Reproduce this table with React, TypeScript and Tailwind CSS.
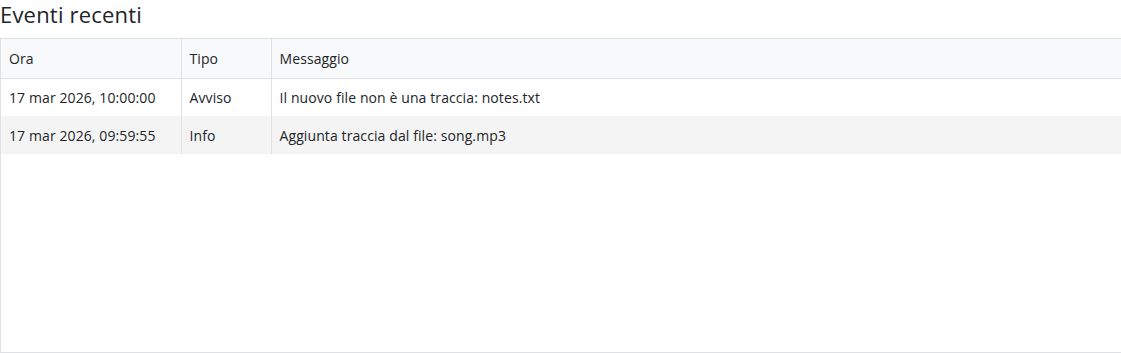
const EVENTS = [
  { time: "17 mar 2026, 10:00:00", type: "Avviso", message: "Il nuovo file non è una traccia: notes.txt" },
  { time: "17 mar 2026, 09:59:55", type: "Info", message: "Aggiunta traccia dal file: song.mp3" },
];

export default function App() {
  return (
    <div className="h-[353px] w-[1121px] overflow-hidden bg-white text-[#212529] font-['Segoe_UI','Open_Sans',sans-serif]">
      <h2 className="h-[38px] text-[22px] leading-[28px] font-normal tracking-[0.2px]">Eventi recenti</h2>

      {/* Events table */}
      <div className="h-[315px] w-[1130px] border border-[#dee2e6]">
        <table className="w-full border-collapse text-[14px] tracking-[0.1px]">
          <thead>
            <tr className="h-[39px] bg-[#f8f9fa] border-b border-[#dee2e6]">
              <th className="w-[180px] px-2 text-left font-normal border-r border-[#dee2e6]">Ora</th>
              <th className="w-[90px] px-2 text-left font-normal border-r border-[#dee2e6]">Tipo</th>
              <th className="px-2 text-left font-normal">Messaggio</th>
            </tr>
          </thead>
          <tbody>
            {EVENTS.map((ev, i) => (
              <tr key={ev.time} className={`h-[38px] ${i % 2 === 1 ? "bg-[#f4f4f4]" : "bg-white"}`}>
                <td className="px-2 border-r border-[#dee2e6]">{ev.time}</td>
                <td className="px-2 border-r border-[#dee2e6]">{ev.type}</td>
                <td className="px-2">{ev.message}</td>
              </tr>
            ))}
          </tbody>
        </table>
      </div>
    </div>
  );
}
